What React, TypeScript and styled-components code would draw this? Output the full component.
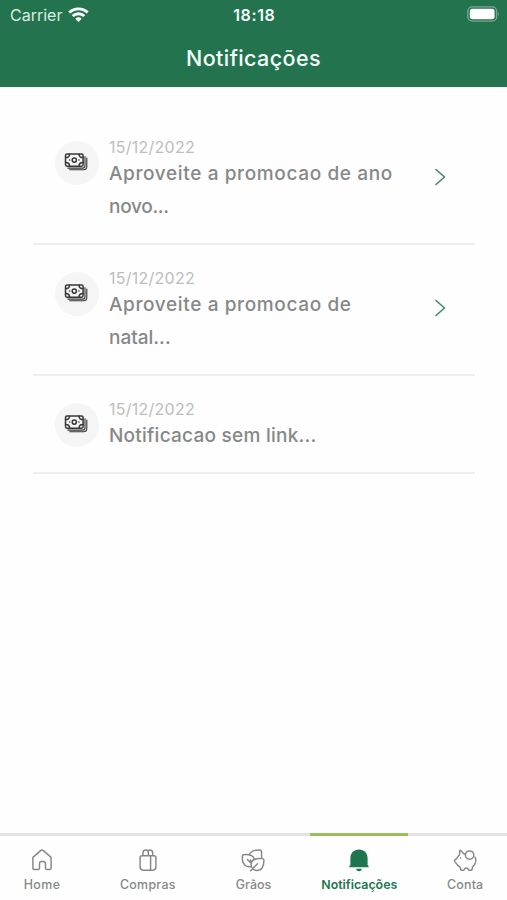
import React from 'react';
import styled, { createGlobalStyle } from 'styled-components';

const GlobalStyle = createGlobalStyle`
  * { box-sizing: border-box; }
  body { margin: 0; background: #fff; font-family: Inter, "Open Sans", sans-serif; }
  svg { display: block; flex: none; }
`;

const Screen = styled.div`
  width: 507px;
  height: 900px;
  display: flex;
  flex-direction: column;
  overflow: hidden;
  background: #fefefe;
`;

const Header = styled.header`
  height: 87px;
  flex: none;
  background: #24734f;
  color: #f3fff8;
`;

const StatusBar = styled.div`
  height: 30px;
  padding: 0 7px 0 10px;
  display: grid;
  grid-template-columns: 1fr auto 1fr;
  align-items: center;
`;

const Carrier = styled.div`
  display: flex;
  align-items: center;
  gap: 6px;
  color: #d9eee2;
  font-size: 16px;
  line-height: 30px;
`;

const Clock = styled.div`
  font-size: 16px;
  line-height: 30px;
  font-weight: 600;
  letter-spacing: 0.6px;
  margin: 0 0.4px 0 -1px;
`;

const Battery = styled.div`
  display: flex;
  justify-content: flex-end;
  padding-bottom: 2px;
`;

const Title = styled.h1`
  margin: 0;
  text-align: center;
  font-size: 21.5px;
  line-height: 56px;
  font-weight: 500;
  letter-spacing: 0.4px;
`;

const List = styled.main`
  flex: 1;
  padding: 27px 32px 0 33px;
`;

const Item = styled.article<{ $tall: boolean }>`
  height: ${p => (p.$tall ? 131 : 98)}px;
  padding: 23px 28px 0 22px;
  display: flex;
  align-items: flex-start;
  border-bottom: 2px solid #eeeeee;
`;

const Avatar = styled.div`
  width: 44px;
  height: 44px;
  margin: 3.5px 10px 0 0;
  flex: none;
  display: grid;
  place-items: center;
  padding: 0 2px 2px 0;
  border-radius: 50%;
  background: #f5f5f5;
`;

const Message = styled.div`
  flex: 1;
`;

const DateText = styled.div`
  color: #bdbdbd;
  font-size: 16px;
  line-height: 20px;
  font-weight: 400;
  letter-spacing: 0.25px;
`;

const Body = styled.p`
  margin: 1px 0 0;
  color: #858887;
  font-size: 19px;
  line-height: 32.5px;
  font-weight: 500;
`;

const Line = styled.span<{ $tracking: number }>`
  display: block;
  white-space: nowrap;
  letter-spacing: ${p => p.$tracking}px;
`;

const Arrow = styled.div`
  padding-top: 31px;
`;

const TabBar = styled.nav`
  height: 67px;
  margin: 0 -11px;
  flex: none;
  display: grid;
  grid-template-columns: repeat(5, 1fr);
  border-top: 3px solid #e3e3e3;
`;

const Tab = styled.div<{ $active?: boolean }>`
  display: flex;
  flex-direction: column;
  align-items: center;
  margin: -3px 4px 0;
  padding-top: ${p => (p.$active ? 11 : 14)}px;
  border-top: ${p => (p.$active ? '3px solid #98bf58' : '0')};
  color: ${p => (p.$active ? '#1d7650' : '#858887')};
  font-weight: ${p => (p.$active ? 600 : 450)};
  font-size: 12.4px;
  line-height: 20px;
`;

const TabLabel = styled.span<{ $tracking: number }>`
  margin-top: 2px;
  letter-spacing: ${p => p.$tracking}px;
  margin-right: -${p => p.$tracking}px;
`;

const Wifi = () => (
  <svg width="21" height="16" viewBox="0 0 21 16" fill="none" stroke="#fff" strokeWidth="2.8">
    <path d="M1.3 5.6a13.2 13.2 0 0 1 18.4 0" />
    <path d="M4.7 9.1a8.3 8.3 0 0 1 11.6 0" />
    <path d="M7.3 11.8a4.7 4.7 0 0 1 6.4 0L10.5 15z" fill="#fff" stroke="none" />
  </svg>
);

const BatteryIcon = () => (
  <svg width="33" height="16" viewBox="0 0 33 16">
    <rect x=".8" y=".8" width="28.8" height="14.4" rx="4.4" fill="none" stroke="#7baa91" strokeWidth="1.3" />
    <rect x="2.8" y="2.8" width="24.8" height="10.4" rx="2.6" fill="#fff" />
    <path d="M31 5.6q1.8 2.4 0 4.8z" fill="#7baa91" />
  </svg>
);

const Money = () => (
  <svg width="24" height="18" viewBox="0 0 24 18" fill="none" stroke="#373737" strokeWidth="1.5" strokeLinecap="round" strokeLinejoin="round">
    <rect x="1.5" y="1" width="17.6" height="12.2" rx="1.6" />
    <circle cx="10.3" cy="7.1" r="2.1" />
    <path d="M5.5 1.2c0 2.2-1.6 3.4-3.8 3.4M15.1 1.2c0 2.2 1.6 3.4 3.8 3.4M5.5 13c0-2.2-1.6-3.4-3.8-3.4M15.1 13c0-2.2 1.6-3.4 3.8-3.4M5.6 7.1h.1M14.9 7.1h.1" />
    <path d="M21 3.6v9.2q0 2.3-2.3 2.3H3.8M22.8 5v8.5q0 3.3-3.3 3.3H5.7" strokeWidth="1.1" />
  </svg>
);

const Chevron = () => (
  <svg width="13" height="18" viewBox="0 0 13 18" fill="none" stroke="#3b8967" strokeWidth="1.6" strokeLinecap="round" strokeLinejoin="round">
    <path d="m2 1.5 8.5 7.5L2 16.5" />
  </svg>
);

const TabIcon = styled.svg`
  width: 26px;
  height: 26px;
  fill: none;
  stroke: #858887;
  stroke-width: 1.45;
  stroke-linecap: round;
  stroke-linejoin: round;
`;

const Home = () => (
  <TabIcon viewBox="0 0 26 26">
    <path d="M3.9 10.4 11.6 3.6q1.4-1.2 2.8 0l7.7 6.8v10.8q0 1.2-1.2 1.2h-3.3q-1.1 0-1.1-1.1v-4.6q0-2.2-2.2-2.2h-1.8q-2 0-2 2.2v4.6q0 1.1-1.1 1.1H5.1q-1.2 0-1.2-1.2z" />
  </TabIcon>
);

const Bag = () => (
  <TabIcon viewBox="0 0 26 26">
    <path d="M7 8.7h12q1.9 0 1.9 1.9v9.5q0 3.1-3.1 3.1H8.2q-3.1 0-3.1-3.1v-9.5Q5.1 8.7 7 8.7zM15.6 8.7v14.5M8 8.5V6q0-3 2.7-3t2.7 3v2.5M12.8 3.6q1-.6 2-.6 2.9 0 2.9 3v2.5" />
  </TabIcon>
);

const Leaves = () => (
  <TabIcon viewBox="0 0 26 26">
    <path d="M11.2 19.6C6 20.8 2.4 17.2 2.4 12.2V8.9q0-1.1 1.1-1.2C9 7.2 13.2 8.6 14.4 12.2" />
    <path d="M9.4 7.7C10.8 4.1 15.2 2.7 20.3 3q.9 0 1 .9.5 3.8.3 7.4" />
    <path d="M22.7 11.6c-7.2-.8-11.6 1.2-11.6 5.9 0 3.5 2.5 5.9 5.9 5.9 4.8 0 7-4.2 6.9-10.5q0-1.1-1.2-1.3zM17.6 16.8l-7.1 7M7.4 12.6l4 4M10.6 13v2.8" />
  </TabIcon>
);

const Bell = () => (
  <TabIcon viewBox="0 0 26 26">
    <path d="M4.4 18.3V11.2C4.4 6 7.8 2.4 13 2.4s8.6 3.6 8.6 8.8v7.1c.7.3 1.2 1 1.2 2H3.2c0-1 .5-1.7 1.2-2zM10.2 21.8h5.6c0 1.4-1.2 2.5-2.8 2.5s-2.8-1.1-2.8-2.5z" fill="#1d7650" stroke="none" />
  </TabIcon>
);

const Pig = () => (
  <TabIcon viewBox="0 0 26 26">
    <circle cx="17.6" cy="8.1" r="4.2" />
    <path d="M13.4 6.9h-1.3L8.6 3.4q-.7-.5-.8.3l-.3 4.1-3 3.8-1.6 1.3q-.8.7-.3 1.5l3 3.7 3 2.7v1.4q0 1.1 1.1 1.1h1.6q1 0 1.1-1 .2-1.3 1.9-1.3t1.9 1.3q.1 1 1.1 1h1.8q.9 0 1-.9l.4-2.5q3.5-2.9 3.3-7.5-.1-1.3-.8-2.3M8.7 10.9h.1" />
  </TabIcon>
);

const notifications = [
  {
    id: 1,
    lines: [
      { text: 'Aproveite a promocao de ano', tracking: 0.63 },
      { text: 'novo...', tracking: -0.3 },
    ],
  },
  {
    id: 2,
    lines: [
      { text: 'Aproveite a promocao de', tracking: 0.63 },
      { text: 'natal...', tracking: 0 },
    ],
  },
  { id: 3, lines: [{ text: 'Notificacao sem link...', tracking: 0.25 }] },
];

export default function App() {
  return (
    <>
      <GlobalStyle />
      <Screen>
        <Header>
          <StatusBar>
            <Carrier>Carrier <Wifi /></Carrier>
            <Clock>18:18</Clock>
            <Battery><BatteryIcon /></Battery>
          </StatusBar>
          <Title>Notificações</Title>
        </Header>
        <List>
          {notifications.map(({ id, lines }) => (
            <Item key={id} $tall={lines.length > 1}>
              <Avatar><Money /></Avatar>
              <Message>
                <DateText>15/12/2022</DateText>
                <Body>
                  {lines.map(line => (
                    <Line key={line.text} $tracking={line.tracking}>{line.text}</Line>
                  ))}
                </Body>
              </Message>
              {lines.length > 1 && <Arrow><Chevron /></Arrow>}
            </Item>
          ))}
        </List>
        <TabBar>
          <Tab><Home /><TabLabel $tracking={0.5}>Home</TabLabel></Tab>
          <Tab><Bag /><TabLabel $tracking={0.3}>Compras</TabLabel></Tab>
          <Tab><Leaves /><TabLabel $tracking={0.1}>Grãos</TabLabel></Tab>
          <Tab $active><Bell /><TabLabel $tracking={0}>Notificações</TabLabel></Tab>
          <Tab><Pig /><TabLabel $tracking={0.2}>Conta</TabLabel></Tab>
        </TabBar>
      </Screen>
    </>
  );
}
